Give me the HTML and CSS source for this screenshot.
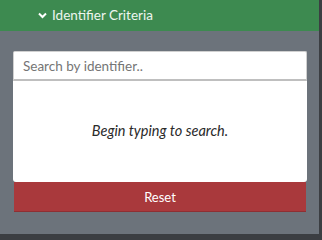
FILE: index.html
```html
<!DOCTYPE html>
<html>
<head>
<meta charset="utf-8">
<link rel="stylesheet" href="styles.css">
</head>
<body>
<div class="panel">
  <div class="header">
    <svg class="chev" width="9" height="7" viewBox="0 0 9 7"><path d="M1 1.5 L4.5 5 L8 1.5" fill="none" stroke="#fff" stroke-width="2"/></svg>
    <span>Identifier Criteria</span>
  </div>
  <div class="body">
    <input class="search" type="text" placeholder="Search by identifier..">
    <div class="results"><em>Begin typing to search.</em></div>
    <button class="reset">Reset</button>
  </div>
</div>
</body>
</html>
```
FILE: styles.css
```css
html, body { margin: 0; padding: 0; }
body { background: #3b3e42; width: 322px; height: 237px; overflow: hidden; font-family: Lato, "Noto Sans", sans-serif; }
.panel { width: 319px; height: 234px; background: #6c737b; }
.header { height: 31px; background: #3d8a50; color: #eef6ef; display: flex; align-items: center; padding-left: 38px; font-size: 13.5px; box-sizing: border-box; padding-bottom: 1px; }
.chev { margin-right: 5px; }
.body { padding: 20px 12px 0 13px; display: flex; flex-direction: column; }
.search { box-sizing: border-box; height: 30px; width: 294px; border: 1px solid #d0d0d0; border-bottom: 2px solid #bfbfbf; border-radius: 2px 2px 0 0; padding: 0 9px; font-family: inherit; font-size: 13.5px; color: #333; background: #fff; outline: none; }
.search::placeholder { color: #757575; }
.results { height: 101px; width: 294px; box-sizing: border-box; background: #fff; border-radius: 0 0 3px 3px; display: flex; align-items: center; justify-content: center; color: #2a2a2a; font-size: 14.5px; padding-bottom: 2px; }
.reset { margin: 0 1px; width: 292px; height: 30px; background: #a9393c; color: #fff; border: none; border-bottom: 1px solid #8e2f33; font-family: inherit; font-size: 13px; padding: 0; }
```
